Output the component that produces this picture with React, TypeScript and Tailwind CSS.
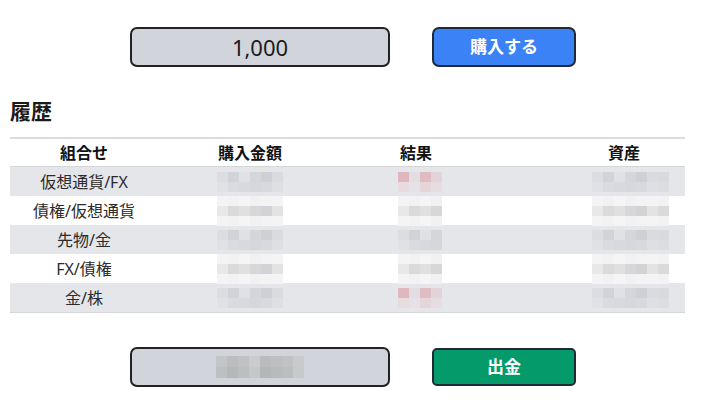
const rows = [
  { name: "仮想通貨/FX", shade: true, red: true },
  { name: "債権/仮想通貨", shade: false, red: false },
  { name: "先物/金", shade: true, red: false },
  { name: "FX/債権", shade: false, red: false },
  { name: "金/株", shade: true, red: true },
]

const grayTop = ["#dcdde1", "#d2d3d8", "#e0e1e5", "#d5d6da", "#cfd0d5", "#dadbdf", "#d9dade", "#e0e1e4"]
const grayBottom = ["#e0e1e5", "#dadbe0", "#d8d9de", "#d6d7dc", "#d8d9de", "#dedfe3", "#dcdde1", "#e1e2e5"]
const lightTop = ["#f4f4f5", "#f2f2f3", "#f5f5f6", "#f1f1f2", "#f3f3f4", "#f4f4f5", "#f2f2f3", "#f5f5f6"]
const lightMid = ["#e8e8e9", "#dadadc", "#e0e0e1", "#d7d7d9", "#d3d3d5", "#e3e3e4", "#dadadc", "#e8e8e9"]
const redTop = ["#dfb8bd", "#e3dde2", "#dfbcc1", "#e3d2d7"]
const redBottom = ["#e7dbe0", "#e6e1e6", "#e4d5da", "#e5dde2"]

function Mosaic({ count, shade, red }: { count: number; shade: boolean; red?: boolean }) {
  const lines = red
    ? [redTop, redBottom]
    : shade
      ? [grayTop, grayBottom]
      : [lightTop, lightMid, lightTop]
  return (
    <div className="flex flex-col">
      {lines.map((line, i) => (
        <div key={i} className="flex">
          {Array.from({ length: count }).map((_, j) => (
            <div
              key={j}
              className="w-[11px] h-[10px]"
              style={{ backgroundColor: line[j % line.length] }}
            />
          ))}
        </div>
      ))}
    </div>
  )
}

const boxTop = ["#c4c5c9", "#bcbdc1", "#c0c1c5", "#cacbcf", "#babbbf", "#bebfc3", "#c1c2c6", "#c9cace"]
const boxBottom = ["#bebfc3", "#b6b7bb", "#bdbec2", "#c6c7cb", "#b5b6ba", "#b9babe", "#bcbdc1", "#c8c9cd"]

export default function App() {
  return (
    <div className="w-[710px] h-[410px] bg-white font-['Noto_Sans','Noto_Sans_CJK_JP',sans-serif] text-[#1a1a1a]">
      <div className="flex pt-[27px] pl-[130px] gap-[42px]">
        <div className="w-[260px] h-[40px] rounded-[7px] border-2 border-[#222] bg-[#d1d5db] flex items-center justify-center text-[22px]">
          1,000
        </div>
        <button className="w-[144px] h-[40px] rounded-[7px] border-2 border-[#1f2937] bg-[#3b82f6] text-white text-[17px] font-bold">
          購入する
        </button>
      </div>

      <h2 className="mt-[31px] ml-[10px] text-[21px] font-bold leading-[26px]">履歴</h2>

      <div className="mt-[13px] ml-[10px] w-[675px] overflow-hidden border-t-2 border-[#dcdcdf]">
        <div className="grid grid-cols-[148px_184px_148px_268px] h-[28px] border-b border-[#d6d6d9] items-center text-[16px] font-bold text-[#111]">
          <div className="text-center">組合せ</div>
          <div className="text-center">購入金額</div>
          <div className="text-center">結果</div>
          <div className="text-center">資産</div>
        </div>
        {rows.map((r) => (
          <div
            key={r.name}
            className={`grid grid-cols-[148px_184px_148px_268px] h-[29px] items-center text-[16px] text-[#2b2b2b] ${r.shade ? "bg-[#e5e6ea]" : "bg-white"}`}
          >
            <div className="text-center">{r.name}</div>
            <div className="flex justify-center">
              <Mosaic count={6} shade={r.shade} />
            </div>
            <div className="flex justify-center pl-[8px]">
              <Mosaic count={4} shade={r.shade} red={r.red} />
            </div>
            <div className="flex justify-center pl-[12px]">
              <Mosaic count={7} shade={r.shade} />
            </div>
          </div>
        ))}
        <div className="h-[1px] bg-[#d6d6d9]" />
      </div>

      <div className="flex mt-[34px] pl-[130px] gap-[42px]">
        <div className="w-[260px] h-[40px] rounded-[7px] border-2 border-[#222] bg-[#d1d5db] flex items-center justify-center">
          <div className="flex flex-col">
            <div className="flex">
              {boxTop.map((c, i) => (
                <div key={i} className="w-[11px] h-[11px]" style={{ backgroundColor: c }} />
              ))}
            </div>
            <div className="flex">
              {boxBottom.map((c, i) => (
                <div key={i} className="w-[11px] h-[11px]" style={{ backgroundColor: c }} />
              ))}
            </div>
          </div>
        </div>
        <button className="w-[144px] h-[38px] mt-[1px] rounded-[5px] border-2 border-[#1f2937] bg-[#049a6a] text-white text-[17px] font-bold">
          出金
        </button>
      </div>
    </div>
  )
}
